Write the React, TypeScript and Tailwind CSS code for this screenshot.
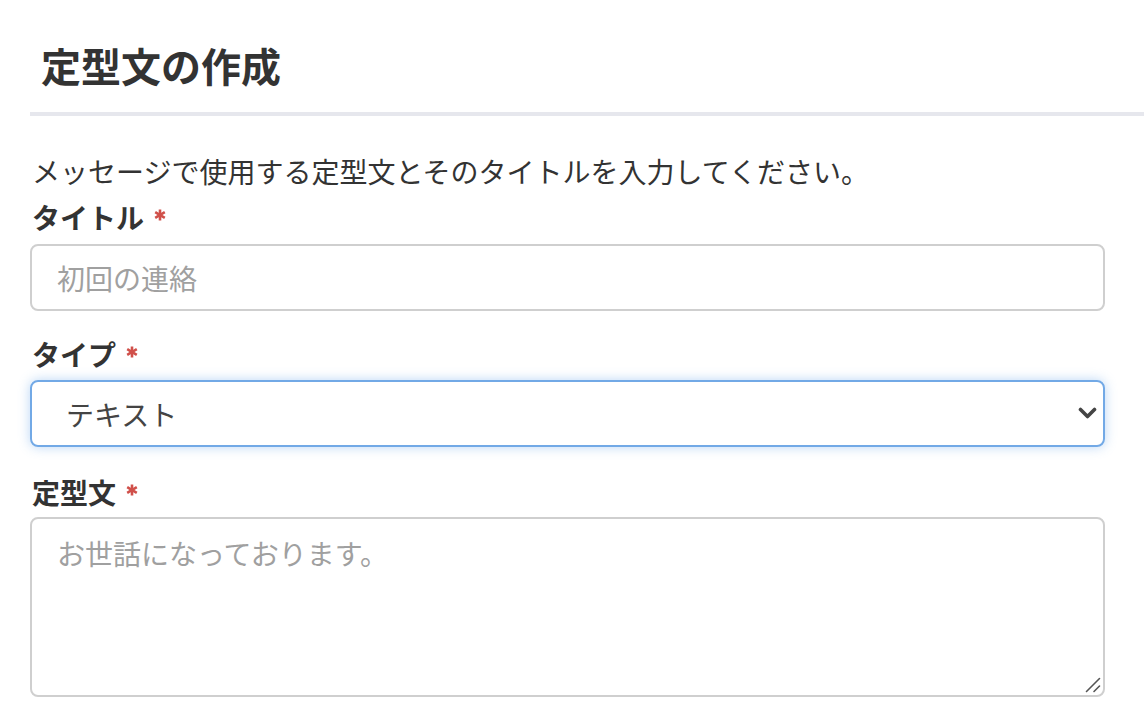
import React from "react";

const font = { fontFamily: '"Noto Sans CJK JP", "Noto Sans", sans-serif' };

function Req() {
  return (
    <svg className="ml-[10px] -mt-[4px]" width="12" height="12" viewBox="0 0 12 12">
      <g stroke="#d0504a" strokeWidth="2.6" strokeLinecap="butt">
        <path d="M6 0.5 V11.5" />
        <path d="M1.2 3.2 L10.8 8.8" />
        <path d="M1.2 8.8 L10.8 3.2" />
      </g>
    </svg>
  );
}

export default function App() {
  return (
    <div className="w-[1144px] h-[720px] bg-white overflow-hidden pl-[30px]" style={font}>
      <h1 className="pt-[42px] pl-[11px] text-[40px] leading-[46px] font-bold text-[#333]">定型文の作成</h1>
      <div className="mt-[24px] h-[4px] bg-[#e6e7ed]" />
      <p className="mt-[36px] pl-[2px] text-[28px] leading-[38px] text-[#333]">
        メッセージで使用する定型文とそのタイトルを入力してください。
      </p>
      <div className="mt-[8px] pl-[2px] flex items-center text-[28px] leading-[38px] font-bold text-[#333]">
        タイトル<Req />
      </div>
      <input
        className="mt-[8px] block w-[1075px] h-[67px] rounded-[8px] border-2 border-[#cfcfcf] pl-[25px] text-[28px] text-[#333] placeholder:text-[#a0a0a0] outline-none"
        placeholder="初回の連絡"
      />
      <div className="mt-[24px] pl-[2px] flex items-center text-[28px] leading-[38px] font-bold text-[#333]">
        タイプ<Req />
      </div>
      <div className="relative mt-[7px] w-[1075px] h-[67px]">
        <div className="w-full h-full rounded-[8px] border-2 border-[#72a9e6] shadow-[0_0_12px_rgba(102,165,233,0.45)] flex items-center pl-[34px] text-[28px] text-[#444]">
          テキスト
        </div>
        <svg className="absolute right-[8px] top-[27px]" width="19" height="13" viewBox="0 0 19 13">
          <path d="M2.5 2.5 L9.5 9.5 L16.5 2.5" fill="none" stroke="#444" strokeWidth="3.6" strokeLinecap="round" strokeLinejoin="round" />
        </svg>
      </div>
      <div className="mt-[26px] pl-[2px] flex items-center text-[28px] leading-[38px] font-bold text-[#333]">
        定型文<Req />
      </div>
      <div className="relative mt-[6px] w-[1075px] h-[180px]">
        <textarea
          className="block w-full h-full resize-none rounded-[8px] border-2 border-[#cfcfcf] pl-[25px] pt-[14px] text-[28px] leading-[40px] text-[#333] placeholder:text-[#a0a0a0] outline-none"
          placeholder="お世話になっております。"
        />
        <svg className="absolute right-[4px] bottom-[4px]" width="16" height="16" viewBox="0 0 16 16">
          <g stroke="#555" strokeWidth="1.6" strokeLinecap="round">
            <path d="M1.5 14.5 L14.5 1.5" />
            <path d="M9 14.5 L14.5 9" />
          </g>
        </svg>
      </div>
    </div>
  );
}
